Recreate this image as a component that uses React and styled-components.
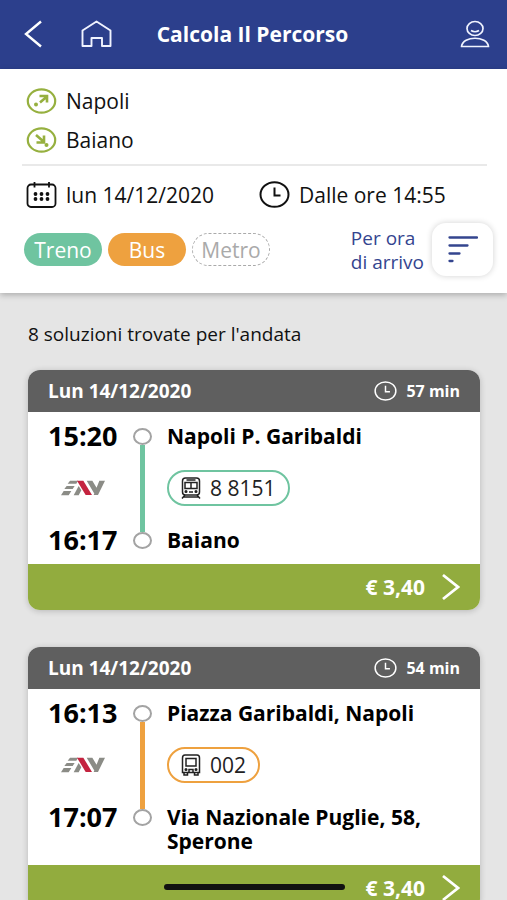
import React from "react";
import styled, { createGlobalStyle } from "styled-components";

const GlobalStyle = createGlobalStyle`
  * {
    box-sizing: border-box;
  }

  body {
    margin: 0;
    background: #e5e5e5;
    color: #111;
    font-family: "Open Sans", "Noto Sans", sans-serif;
  }

  button {
    margin: 0;
    padding: 0;
    border: 0;
    background: none;
    color: inherit;
    font: inherit;
    cursor: pointer;
  }

  svg {
    display: block;
    flex: none;
  }
`;

const TopBar = styled.header`
  display: grid;
  grid-template-columns: 97px 1fr 97px;
  align-items: center;
  height: 69px;
  padding: 0 17px 2px 15px;
  background: #2c3f8c;
  color: #fff;
`;

const BarActions = styled.div`
  display: flex;
  justify-content: ${(props) => (props.$end ? "flex-end" : "space-between")};
`;

const Title = styled.h1`
  margin: 0;
  font-size: 21px;
  line-height: 28px;
  font-weight: 700;
  text-align: center;
  white-space: nowrap;
`;

const SearchPanel = styled.section`
  padding: 12px 14px 17px 22px;
  background: #fff;
  box-shadow: 0 2px 6px rgba(0, 0, 0, 0.25);
`;

const Stops = styled.ul`
  margin: 0 6px 0 0;
  padding: 0 4px 5px;
  border-bottom: 2px solid #e9e9e9;
  list-style: none;
`;

const Field = styled.li`
  display: flex;
  align-items: center;
  gap: 9px;
  height: 39px;
  font-size: 21px;
  line-height: 28px;
  white-space: nowrap;
`;

const WhenRow = styled.div`
  display: flex;
  gap: 45px;
  padding: 9px 4px;
`;

const FilterRow = styled.div`
  display: flex;
  align-items: center;
  justify-content: space-between;
  padding-left: 2px;
`;

const Chips = styled.div`
  display: flex;
  gap: 6px;
`;

const Chip = styled.button`
  width: 78px;
  height: 33px;
  border-radius: 17px;
  background: ${(props) => props.$color};
  color: #fff;
  font-size: 21px;
  line-height: 28px;
`;

const ChipOff = styled(Chip)`
  border: 1px dashed #aaa;
  background: none;
  color: #aaa;
`;

const Sort = styled.div`
  display: flex;
  align-items: center;
  gap: 8px;
`;

const SortLabel = styled.label`
  color: #34458f;
  font-size: 19px;
  line-height: 24px;
`;

const SortButton = styled.button`
  display: grid;
  place-items: center;
  width: 61px;
  height: 53px;
  border-radius: 14px;
  background: #fff;
  box-shadow: 0 0 6px rgba(0, 0, 0, 0.18);
`;

const Results = styled.main`
  display: flex;
  flex-direction: column;
  gap: 37px;
  padding: 29px 27px 48px 28px;
`;

const Summary = styled.p`
  margin: 0 0 -13px;
  font-size: 19px;
  line-height: 24px;
`;

const Card = styled.article`
  overflow: hidden;
  border-radius: 12px;
  background: #fff;
  color: #000;
  box-shadow: 0 1px 6px rgba(0, 0, 0, 0.2);
`;

const CardHead = styled.div`
  display: flex;
  align-items: center;
  justify-content: space-between;
  height: 42px;
  padding: 0 20px;
  background: #5f5f5f;
  color: #fff;
  font-size: 19px;
  font-weight: 700;
`;

const Duration = styled.span`
  display: flex;
  align-items: center;
  gap: 9px;
  font-size: 16px;
`;

const Trip = styled.div`
  display: grid;
  grid-template-columns: 69px 50px 1fr;
  grid-template-rows: 24px 80px auto;
  padding: 12px 20px;
`;

const Time = styled.time`
  font-size: 27px;
  line-height: 24px;
  font-weight: 700;
`;

const Place = styled.span`
  font-size: 21px;
  line-height: 24px;
  font-weight: 700;
`;

const Operator = styled.span`
  align-self: center;
  justify-self: center;
`;

const Dot = styled.span`
  justify-self: center;
  width: 19px;
  height: 17px;
  margin-top: 4px;
  border: 2px solid #a3a3a3;
  border-radius: 50%;
  background: #fff;
`;

const Line = styled.span`
  justify-self: center;
  width: 5px;
  margin: -3px 0 -4px;
  background: ${(props) => props.$color};
`;

const Vehicle = styled.span`
  display: flex;
  align-items: center;
  align-self: center;
  justify-self: start;
  gap: 9px;
  height: 36px;
  padding: 0 12px;
  border: 2px solid ${(props) => props.$color};
  border-radius: 18px;
  color: #222;
  font-size: 21px;
  line-height: 28px;
`;

const Buy = styled.button`
  display: flex;
  align-items: center;
  justify-content: flex-end;
  gap: 17px;
  width: 100%;
  height: 46px;
  padding: 0 20px;
  background: #92ac3e;
  color: #fff;
  font-size: 21px;
  font-weight: 700;
`;

const HomeIndicator = styled.div`
  position: fixed;
  bottom: 10px;
  left: 50%;
  width: 181px;
  height: 6px;
  margin-left: -90px;
  border-radius: 3px;
  background: #111;
`;

const BackIcon = () => (
  <svg width="36" height="28" viewBox="0 0 36 28" fill="none" stroke="#fff" strokeWidth="2.4">
    <path d="M26 1.500 11 14l15 12.500" />
  </svg>
);

const HomeIcon = () => (
  <svg width="32" height="28" viewBox="0 0 32 28" fill="none" stroke="#f0f3ff" strokeWidth="1.900" strokeLinejoin="round">
    <path d="M2.500 10.500 16.500 1.500l14 9V26h-8.500v-8h-10.500v8h-9z" />
  </svg>
);

const UserIcon = () => (
  <svg width="30" height="28" viewBox="0 0 30 28" fill="none" stroke="#f0f3ff" strokeWidth="1.700">
    <ellipse cx="15" cy="8.500" rx="8" ry="7" />
    <path d="M11 10.500q4 2.500 8 0" />
    <path d="M1.500 26.500C3 15.500 27 15.500 28.500 26.500z" strokeLinejoin="round" />
  </svg>
);

const StopIcon = ({ arrival }) => (
  <svg width="31" height="26" viewBox="0 0 31 26" fill="none" stroke="#96b03f" strokeWidth="2.200">
    <ellipse cx="15.500" cy="13" rx="13.700" ry="11.700" />
    {arrival ? (
      <g strokeWidth="2.600">
        <path d="M10 8l7.500 6.500M18 8.500v7h-7.500" />
        <circle cx="20.500" cy="18" r="2" fill="#96b03f" stroke="none" />
      </g>
    ) : (
      <g strokeWidth="2.600">
        <path d="M14 14.500 21 8.500M13.500 8H21v6.500" />
        <circle cx="10" cy="16.500" r="2" fill="#96b03f" stroke="none" />
      </g>
    )}
  </svg>
);

const CalendarIcon = () => (
  <svg width="31" height="26" viewBox="0 0 31 26" fill="none" stroke="#111" strokeWidth="1.800">
    <rect x="1.500" y="2.500" width="28" height="22.500" rx="3.500" />
    <path d="M8.500 0v5.500M23 0v5.500" />
    <g fill="#111" stroke="none">
      {[9.5, 15.5, 21.5].map((x) => (
        <React.Fragment key={x}>
          <circle cx={x} cy="12" r="1.900" />
          <circle cx={x} cy="17" r="1.900" />
        </React.Fragment>
      ))}
    </g>
  </svg>
);

const ClockIcon = ({ width, height, stroke }) => (
  <svg width={width} height={height} viewBox="0 0 31 27" fill="none" stroke="currentColor" strokeWidth={stroke}>
    <ellipse cx="15.500" cy="13.500" rx="14" ry="12.300" />
    <path d="M15.500 6.500v8h6" />
  </svg>
);

const SortIcon = () => (
  <svg width="30" height="28" viewBox="0 0 30 28" fill="none" stroke="#34458f" strokeWidth="2.300" strokeLinecap="round">
    <path d="M1.500 1.500h27.500M1.500 9.500h18M1.500 17.500h10M1.500 25h3" />
  </svg>
);

const ChevronIcon = () => (
  <svg width="18" height="28" viewBox="0 0 18 28" fill="none" stroke="#fff" strokeWidth="2.800">
    <path d="M1 2l15 12L1 26" />
  </svg>
);

const EavLogo = () => (
  <svg width="44" height="16" viewBox="0 0 132 48" role="img" aria-label="EAV">
    <g fill="#8b8c86">
      <path d="M27 2h24l-5 9H20zM17 18h24l-6 9H10zM8 33h23l-8 13H0z" />
      <path d="M53 18l8 13-8 15H38z" />
      <path d="M77 2h17l15 25-7 17zM115 2h17l-21 43h-13z" />
    </g>
    <path d="M48 2h19l26 43H74z" fill="#c4233f" />
  </svg>
);

const TrainIcon = () => (
  <svg width="20" height="22" viewBox="0 0 20 22" fill="none" stroke="#222" strokeWidth="1.500">
    <rect x="1.500" y="1" width="17" height="17" rx="3" />
    <path d="M5.500 3h9M4 5.500h12v6H4zM10 5.500v6M8 15h4" />
    <path d="M4 18l-3 3.500M16 18l3 3.500M2.500 20h15" />
    <circle cx="5" cy="14.500" r=".8" />
    <circle cx="15" cy="14.500" r=".8" />
  </svg>
);

const BusIcon = () => (
  <svg width="20" height="22" viewBox="0 0 20 22" fill="none" stroke="#222" strokeWidth="1.500">
    <path d="M4 1h12q2.500 0 2.500 3v14.500h-17V4Q1.500 1 4 1zM5 4.500h10V12H5zM8 18v-2.500h4V18" />
    <path d="M3 18.500v2.500h3.500v-2.500M13.500 18.500v2.500H17v-2.500" />
    <circle cx="5" cy="15.500" r=".8" />
    <circle cx="15" cy="15.500" r=".8" />
  </svg>
);

const GREEN = "#6fc4a0";
const ORANGE = "#eea13f";

const solutions = [
  {
    duration: "57 min",
    departure: "15:20",
    arrival: "16:17",
    from: "Napoli P. Garibaldi",
    to: "Baiano",
    line: "8 8151",
    color: GREEN,
    Icon: TrainIcon,
  },
  {
    duration: "54 min",
    departure: "16:13",
    arrival: "17:07",
    from: "Piazza Garibaldi, Napoli",
    to: "Via Nazionale Puglie, 58, Sperone",
    line: "002",
    color: ORANGE,
    Icon: BusIcon,
  },
];

const SolutionCard = ({ duration, departure, arrival, from, to, line, color, Icon }) => (
  <Card>
    <CardHead>
      <span>Lun 14/12/2020</span>
      <Duration>
        <ClockIcon width="23" height="20" stroke="2" />
        {duration}
      </Duration>
    </CardHead>
    <Trip>
      <Time>{departure}</Time>
      <Dot />
      <Place>{from}</Place>
      <Operator>
        <EavLogo />
      </Operator>
      <Line $color={color} />
      <Vehicle $color={color}>
        <Icon />
        {line}
      </Vehicle>
      <Time>{arrival}</Time>
      <Dot />
      <Place>{to}</Place>
    </Trip>
    <Buy>
      € 3,40
      <ChevronIcon />
    </Buy>
  </Card>
);

const App = () => (
  <>
    <GlobalStyle />
    <TopBar>
      <BarActions>
        <button aria-label="Indietro">
          <BackIcon />
        </button>
        <button aria-label="Home">
          <HomeIcon />
        </button>
      </BarActions>
      <Title>Calcola Il Percorso</Title>
      <BarActions $end>
        <button aria-label="Profilo">
          <UserIcon />
        </button>
      </BarActions>
    </TopBar>
    <SearchPanel>
      <Stops>
        <Field>
          <StopIcon />
          Napoli
        </Field>
        <Field>
          <StopIcon arrival />
          Baiano
        </Field>
      </Stops>
      <WhenRow>
        <Field as="button">
          <CalendarIcon />
          lun 14/12/2020
        </Field>
        <Field as="button">
          <ClockIcon width="31" height="27" stroke="2" />
          Dalle ore 14:55
        </Field>
      </WhenRow>
      <FilterRow>
        <Chips>
          <Chip $color={GREEN} aria-pressed="true">
            Treno
          </Chip>
          <Chip $color={ORANGE} aria-pressed="true">
            Bus
          </Chip>
          <ChipOff aria-pressed="false">Metro</ChipOff>
        </Chips>
        <Sort>
          <SortLabel htmlFor="sort">
            Per ora
            <br />
            di arrivo
          </SortLabel>
          <SortButton id="sort">
            <SortIcon />
          </SortButton>
        </Sort>
      </FilterRow>
    </SearchPanel>
    <Results>
      <Summary>8 soluzioni trovate per l'andata</Summary>
      {solutions.map((solution) => (
        <SolutionCard key={solution.line} {...solution} />
      ))}
    </Results>
    <HomeIndicator />
  </>
);

export default App;
